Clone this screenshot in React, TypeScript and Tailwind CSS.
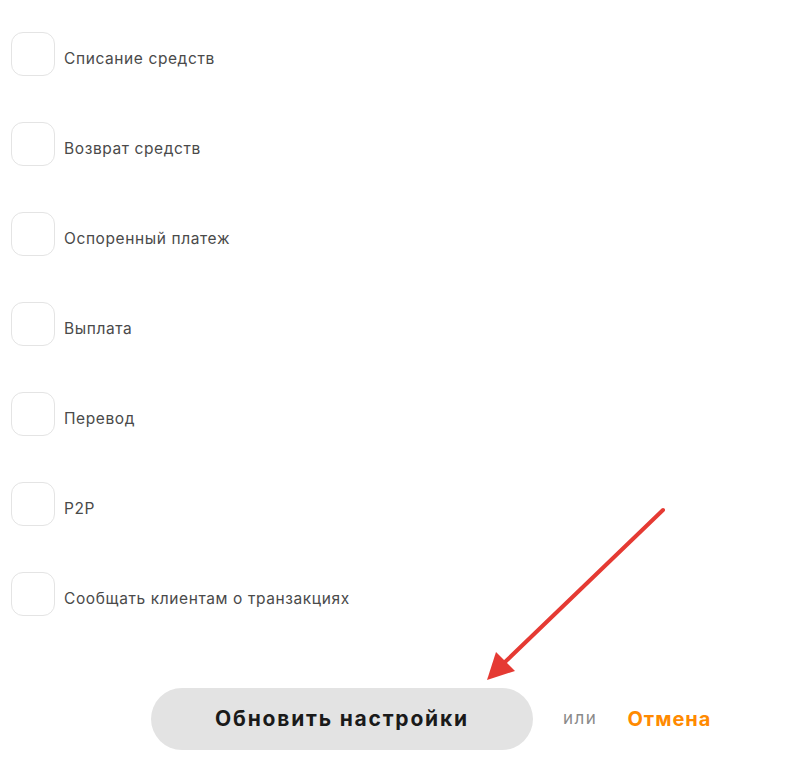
import React from 'react';

const options = [
  'Списание средств',
  'Возврат средств',
  'Оспоренный платеж',
  'Выплата',
  'Перевод',
  'P2P',
  'Сообщать клиентам о транзакциях',
];

export default function App() {
  return (
    <div
      className="relative w-[802px] h-[774px] bg-white overflow-hidden"
      style={{ fontFamily: 'Inter, "Noto Sans", sans-serif' }}
    >
      <div className="flex flex-col gap-[46px] pl-[11px] pt-[32px]">
        {options.map(label => (
          <label key={label} className="flex items-center gap-[9px] h-[44px]">
            <span className="w-[44px] h-[44px] rounded-[12px] border border-[#e4e4e4] bg-white flex-shrink-0" />
            <span className="pt-[10px] text-[15.5px] text-[#4a4a4a] tracking-[0.6px]">{label}</span>
          </label>
        ))}
      </div>

      <div className="flex items-center mt-[72px] pl-[151px]">
        <button className="w-[382px] h-[62px] rounded-full bg-[#e3e3e3] text-[21px] font-bold text-[#1a1a1a] tracking-[1.8px]">
          Обновить настройки
        </button>
        <span className="ml-[30px] text-[17px] text-[#8a8a8a] tracking-[1.5px]">или</span>
        <button className="ml-[30px] text-[20px] font-bold text-[#ff8a00] tracking-[1px]">Отмена</button>
      </div>

      {/* annotation arrow */}
      <svg className="absolute left-0 top-0 pointer-events-none" width="802" height="774">
        <line x1="663" y1="510" x2="505" y2="662" stroke="#e53a33" strokeWidth="4" strokeLinecap="round" />
        <polygon points="487,680 496,652 515,671" fill="#e53a33" />
      </svg>
    </div>
  );
}
